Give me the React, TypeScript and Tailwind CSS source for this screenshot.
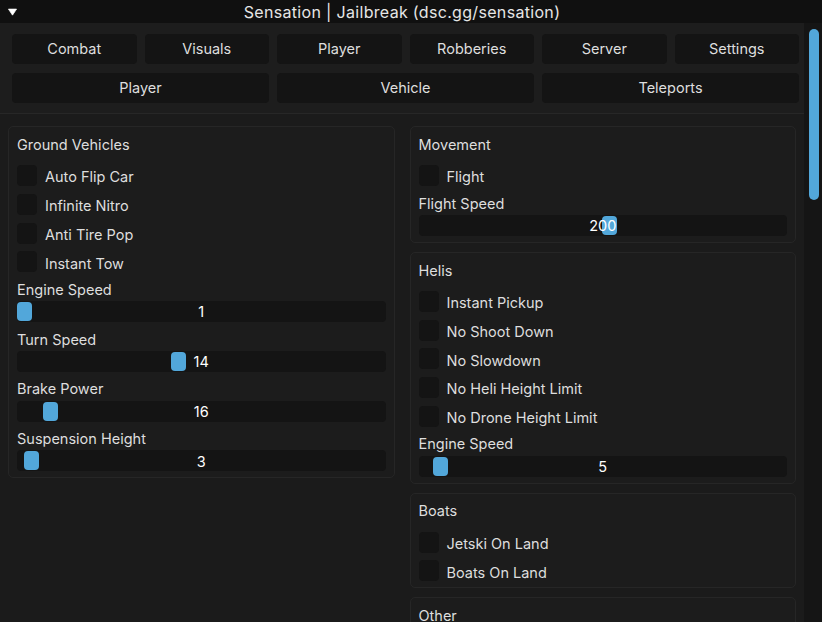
import React from "react";

const FONT = { fontFamily: "Inter, 'Noto Sans', sans-serif" };

const TOP_TABS = ["Combat", "Visuals", "Player", "Robberies", "Server", "Settings"];
const SUB_TABS = ["Player", "Vehicle", "Teleports"];

type Item =
  | { kind: "toggle"; label: string }
  | { kind: "slider"; label: string; value: number; pos: number };

const LEFT: { title: string; items: Item[] }[] = [
  {
    title: "Ground Vehicles",
    items: [
      { kind: "toggle", label: "Auto Flip Car" },
      { kind: "toggle", label: "Infinite Nitro" },
      { kind: "toggle", label: "Anti Tire Pop" },
      { kind: "toggle", label: "Instant Tow" },
      { kind: "slider", label: "Engine Speed", value: 1, pos: 0 },
      { kind: "slider", label: "Turn Speed", value: 14, pos: 154 },
      { kind: "slider", label: "Brake Power", value: 16, pos: 26 },
      { kind: "slider", label: "Suspension Height", value: 3, pos: 7 },
    ],
  },
];

const RIGHT: { title: string; items: Item[] }[] = [
  {
    title: "Movement",
    items: [
      { kind: "toggle", label: "Flight" },
      { kind: "slider", label: "Flight Speed", value: 200, pos: 183 },
    ],
  },
  {
    title: "Helis",
    items: [
      { kind: "toggle", label: "Instant Pickup" },
      { kind: "toggle", label: "No Shoot Down" },
      { kind: "toggle", label: "No Slowdown" },
      { kind: "toggle", label: "No Heli Height Limit" },
      { kind: "toggle", label: "No Drone Height Limit" },
      { kind: "slider", label: "Engine Speed", value: 5, pos: 14 },
    ],
  },
  {
    title: "Boats",
    items: [
      { kind: "toggle", label: "Jetski On Land" },
      { kind: "toggle", label: "Boats On Land" },
    ],
  },
  { title: "Other", items: [] },
];

function Toggle({ label }: { label: string }) {
  return (
    <div className="flex items-center h-[21px] gap-[8px]">
      <div className="h-[21px] w-[20px] rounded-[4px] bg-[#141414]" />
      <span className="text-[14.5px] text-[#dedede] leading-none translate-y-[1.5px]">{label}</span>
    </div>
  );
}

function Slider({ label, value, pos }: { label: string; value: number; pos: number }) {
  return (
    <div className="flex flex-col gap-[3px]">
      <div className="h-[18px] flex items-center text-[14.5px] text-[#dedede] leading-none translate-y-[0.5px]">
        {label}
      </div>
      <div className="relative h-[21px] rounded-[4px] bg-[#141414]">
        <div
          className="absolute top-[1px] h-[19px] w-[15px] rounded-[4px] bg-[#52a7da]"
          style={{ left: pos }}
        />
        <div className="relative z-10 h-full flex items-center justify-center text-[14.5px] text-white leading-none translate-y-[0.5px]">
          {value}
        </div>
      </div>
    </div>
  );
}

function Panel({ title, items }: { title: string; items: Item[] }) {
  return (
    <div className="rounded-[5px] border border-[#262626] bg-[#1c1c1c] px-[8px] pt-[6px] pb-[6px]">
      <div className="h-[20px] flex items-center text-[14.5px] text-[#dedede] leading-none translate-y-[1.5px]">
        {title}
      </div>
      {items.length > 0 && (
        <div className="mt-[12px] flex flex-col gap-[7.75px]">
          {items.map((it, i) =>
            it.kind === "toggle" ? (
              <Toggle key={i} label={it.label} />
            ) : (
              <Slider key={i} label={it.label} value={it.value} pos={it.pos} />
            )
          )}
        </div>
      )}
    </div>
  );
}

export default function App() {
  return (
    <div className="w-[822px] h-[622px] overflow-hidden bg-[#1c1c1c] flex flex-col" style={FONT}>
      {/* Title bar */}
      <div className="h-[23px] shrink-0 bg-[#101010] flex items-center relative">
        <svg viewBox="0 0 10 8" className="absolute left-[8px] top-[8px] h-[8px] w-[9px]">
          <path d="M0.5 0.8 L9.5 0.8 L5 7.5 Z" fill="#ffffff" stroke="#ffffff" strokeWidth="0.8" strokeLinejoin="round" />
        </svg>
        <div className="w-[804px] text-center text-[16px] tracking-[0.02em] text-[#e6e6e6] leading-none">
          Sensation | Jailbreak (dsc.gg/sensation)
        </div>
      </div>

      <div className="flex flex-1 min-h-0">
        <div className="w-[804px] flex flex-col min-h-0">
          {/* Tabs */}
          <div className="shrink-0 pl-[12px] pr-[5px] pt-[11px] pb-[10px] border-b border-[#272727] bg-[#1d1d1d]">
            <div className="grid grid-cols-6 gap-x-[8px] gap-y-[9px]">
              {TOP_TABS.map((t) => (
                <div
                  key={t}
                  className="h-[30px] rounded-[4px] bg-[#141414] flex items-center justify-center text-[14.5px] text-[#dedede]"
                >
                  {t}
                </div>
              ))}
              {SUB_TABS.map((t) => (
                <div
                  key={t}
                  className="col-span-2 h-[30px] rounded-[4px] bg-[#141414] flex items-center justify-center text-[14.5px] text-[#dedede]"
                >
                  {t}
                </div>
              ))}
            </div>
          </div>

          {/* Content */}
          <div className="flex-1 min-h-0 overflow-hidden bg-[#1b1b1b] px-[8px] pt-[12px] flex gap-[15px] items-start">
            <div className="flex-1 flex flex-col gap-[9px]">
              {LEFT.map((p) => (
                <Panel key={p.title} title={p.title} items={p.items} />
              ))}
            </div>
            <div className="flex-1 flex flex-col gap-[9px]">
              {RIGHT.map((p) => (
                <Panel key={p.title} title={p.title} items={p.items} />
              ))}
            </div>
          </div>
        </div>

        {/* Scrollbar */}
        <div className="w-[18px] bg-[#151515] pt-[6px] pl-[5px]">
          <div className="h-[171px] w-[10px] rounded-full bg-[#52a7da]" />
        </div>
      </div>
    </div>
  );
}
